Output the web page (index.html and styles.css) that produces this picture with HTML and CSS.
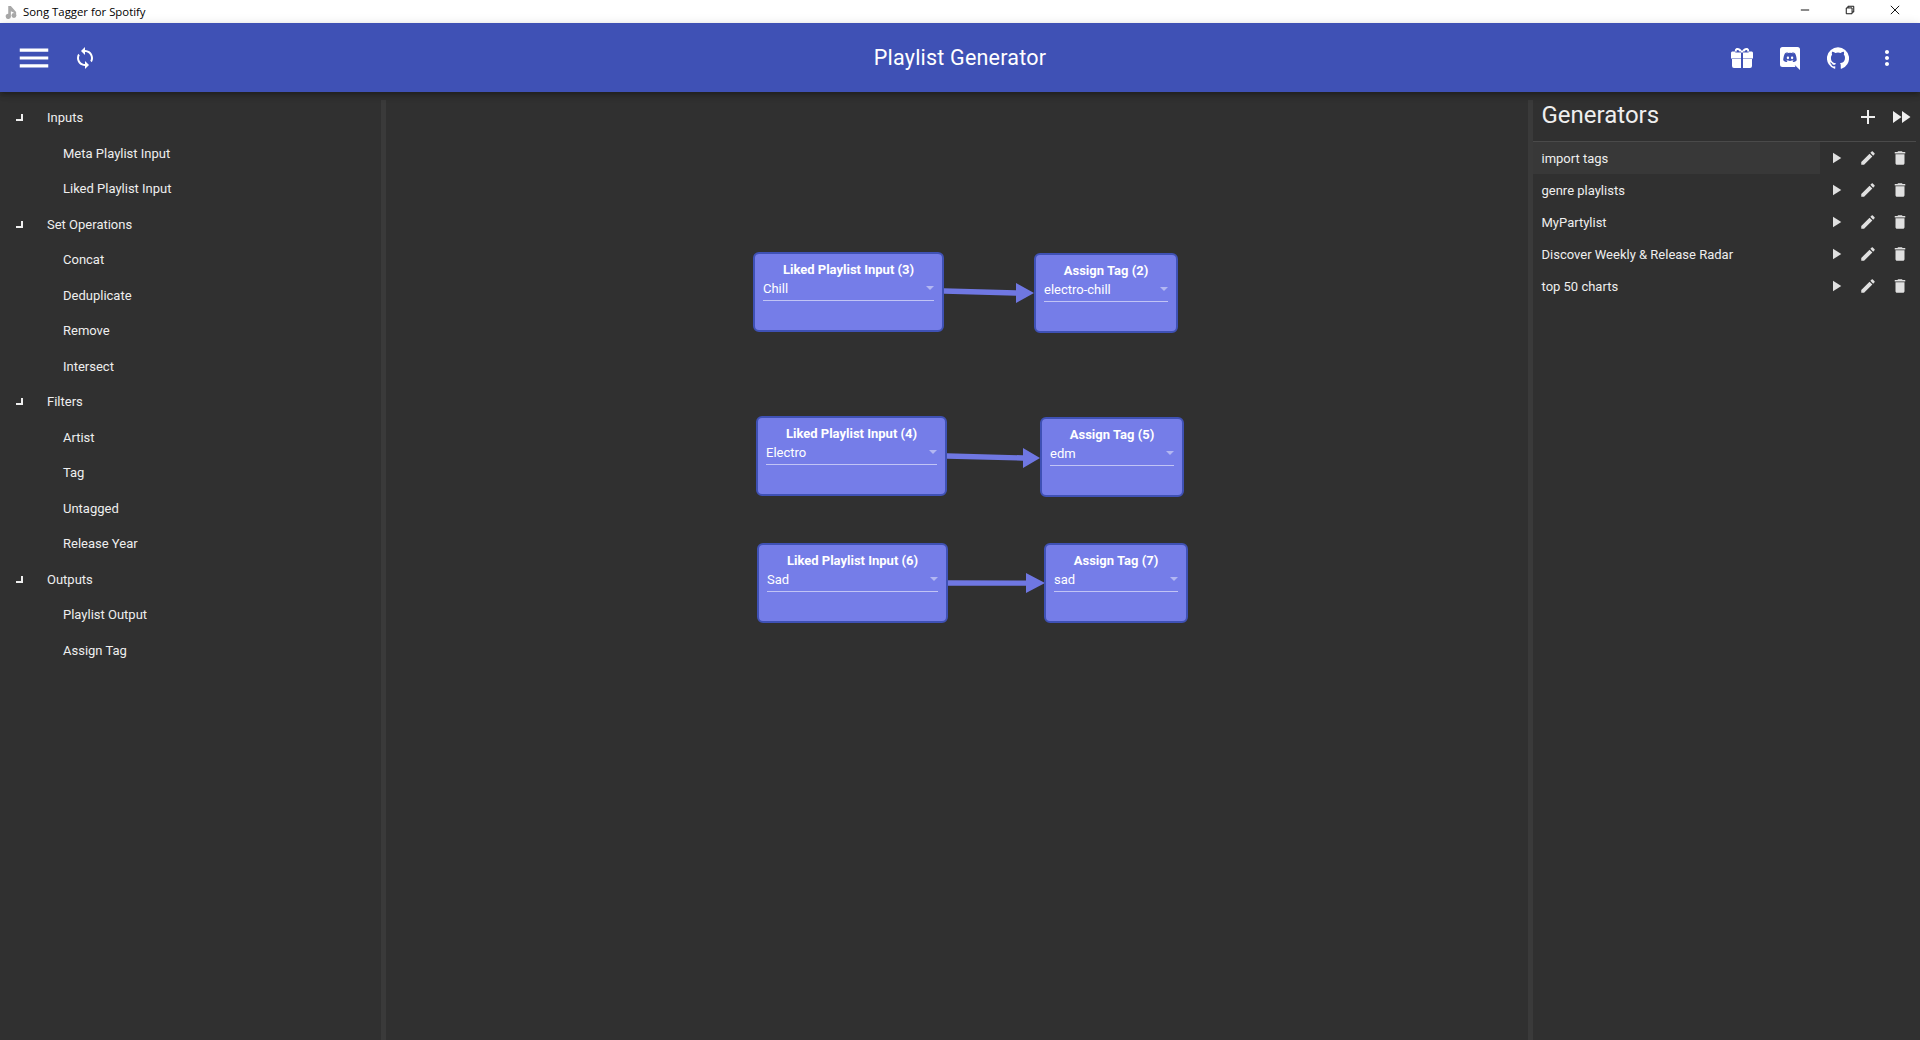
FILE: index.html
```html
<!DOCTYPE html>
<html lang="en">
<head>
<meta charset="utf-8">
<title>Song Tagger for Spotify</title>
<link rel="stylesheet" href="styles.css">
</head>
<body>
<header class="titlebar">
  <div class="titlebar-left">
    <svg class="app-icon" viewBox="0 0 16 16"><path d="M6 1h3l6 7v3.500l-3-3L9 7v5.500A3 3 0 1 1 6 10z"/><circle cx="12.500" cy="12" r="2.800"/></svg>
    <span class="app-name">Song Tagger for Spotify</span>
  </div>
  <div class="window-controls">
    <svg class="win-btn" viewBox="0 0 12 12"><path d="M1 6h10"/></svg>
    <svg class="win-btn" viewBox="0 0 12 12"><path d="M1.500 3.500h7v7h-7zM3.500 3.500v-2h7v7h-2"/></svg>
    <svg class="win-btn" viewBox="0 0 12 12"><path d="M1 1l10 10M11 1L1 11"/></svg>
  </div>
</header>

<nav class="appbar">
  <div class="appbar-side">
    <svg class="ico ico-menu" viewBox="0 0 24 24"><path d="M3 18h18v-2H3v2zm0-5h18v-2H3v2zm0-7v2h18V6H3z"/></svg>
    <svg class="ico ico-sync" viewBox="0 0 24 24"><path d="M12 4V1L8 5l4 4V6c3.310 0 6 2.690 6 6 0 1.010-.25 1.970-.7 2.800l1.460 1.460C19.540 15.030 20 13.570 20 12c0-4.420-3.580-8-8-8zm0 14c-3.310 0-6-2.690-6-6 0-1.010.25-1.970.7-2.800L5.240 7.740C4.460 8.970 4 10.430 4 12c0 4.420 3.580 8 8 8v3l4-4-4-4v3z"/></svg>
  </div>
  <h1 class="appbar-title">Playlist Generator</h1>
  <div class="appbar-side appbar-right">
    <svg class="ico ico-gift" viewBox="0 0 24 24"><path d="M2 5.500h9V12.500H1V7.500a2 2 0 0 1 1-2zM13 5.500h9a2 2 0 0 1 1 2v5H13zM2 13h9v9H4a2 2 0 0 1-2-2zM13 13h9v7a2 2 0 0 1-2 2h-7zM5.500 6.500C4.200 4.500 5 2 7.500 2c1.700 0 3.300 1.300 4.500 3 1.200-1.700 2.800-3 4.500-3 2.500 0 3.300 2.500 2 4.500zM7.700 4c-1.300 0-1.300 1.500-.5 1.500h2.300c-.5-.8-1.100-1.500-1.800-1.500zM16.300 4c-.7 0-1.300.7-1.800 1.500h2.300c.8 0 .8-1.500-.5-1.500z" fill-rule="evenodd"/></svg>
    <svg class="ico ico-discord" viewBox="0 0 24 24"><path d="M22,24L16.750,19L17.380,21H4.500A2.500,2.500 0 0,1 2,18.500V3.500A2.500,2.500 0 0,1 4.500,1H19.500A2.500,2.500 0 0,1 22,3.500V24M12,6.800C9.320,6.800 7.440,7.950 7.440,7.950C8.470,7.030 10.270,6.500 10.270,6.500L10.100,6.330C8.410,6.360 6.880,7.530 6.880,7.530C5.160,11.120 5.270,14.220 5.270,14.220C6.670,16.030 8.750,15.900 8.750,15.900L9.460,15C8.210,14.730 7.420,13.620 7.420,13.620C7.420,13.620 9.300,14.900 12,14.900C14.700,14.900 16.580,13.620 16.580,13.620C16.580,13.620 15.790,14.730 14.540,15L15.250,15.900C15.250,15.900 17.330,16.030 18.730,14.220C18.730,14.220 18.840,11.120 17.120,7.530C17.120,7.530 15.590,6.360 13.900,6.330L13.730,6.500C13.730,6.500 15.530,7.030 16.560,7.950C16.560,7.950 14.680,6.800 12,6.800M9.930,10.590C10.580,10.590 11.110,11.160 11.100,11.860C11.100,12.550 10.580,13.130 9.930,13.130C9.290,13.130 8.770,12.550 8.770,11.860C8.770,11.160 9.280,10.590 9.930,10.590M14.100,10.590C14.750,10.590 15.270,11.160 15.270,11.860C15.270,12.550 14.750,13.130 14.100,13.130C13.460,13.130 12.940,12.550 12.940,11.860C12.940,11.160 13.450,10.590 14.100,10.590Z"/></svg>
    <svg class="ico ico-github" viewBox="0 0 24 24"><path d="M12 .3a12 12 0 0 0-3.800 23.400c.6.1.8-.3.8-.6v-2c-3.300.7-4-1.600-4-1.600-.6-1.400-1.400-1.800-1.400-1.800-1-.7.1-.7.1-.7 1.200 0 1.900 1.200 1.900 1.200 1 1.800 2.800 1.300 3.500 1 0-.8.4-1.300.7-1.600-2.700-.3-5.500-1.300-5.500-6 0-1.200.5-2.300 1.300-3.100-.2-.4-.6-1.600 0-3.200 0 0 1-.3 3.400 1.200a11.500 11.500 0 0 1 6 0c2.300-1.500 3.300-1.200 3.300-1.200.6 1.600.2 2.800 0 3.200.9.8 1.300 1.900 1.300 3.200 0 4.600-2.800 5.600-5.500 5.900.5.4.9 1 .9 2.200v3.300c0 .3.1.7.8.6A12 12 0 0 0 12 .3"/></svg>
    <svg class="ico ico-more" viewBox="0 0 24 24"><path d="M12 8c1.100 0 2-.9 2-2s-.9-2-2-2-2 .9-2 2 .9 2 2 2zm0 2c-1.100 0-2 .9-2 2s.9 2 2 2 2-.9 2-2-.9-2-2-2zm0 6c-1.100 0-2 .9-2 2s.9 2 2 2 2-.9 2-2-.9-2-2-2z"/></svg>
  </div>
</nav>

<main class="workspace">
  <aside class="palette">
    <div class="group"><i class="corner"></i>Inputs</div>
    <div class="leaf">Meta Playlist Input</div>
    <div class="leaf">Liked Playlist Input</div>
    <div class="group"><i class="corner"></i>Set Operations</div>
    <div class="leaf">Concat</div>
    <div class="leaf">Deduplicate</div>
    <div class="leaf">Remove</div>
    <div class="leaf">Intersect</div>
    <div class="group"><i class="corner"></i>Filters</div>
    <div class="leaf">Artist</div>
    <div class="leaf">Tag</div>
    <div class="leaf">Untagged</div>
    <div class="leaf">Release Year</div>
    <div class="group"><i class="corner"></i>Outputs</div>
    <div class="leaf">Playlist Output</div>
    <div class="leaf">Assign Tag</div>
  </aside>
  <div class="splitter"></div>

  <section class="canvas">
    <svg class="edges" viewBox="0 0 1142 948">
      <path d="M558 196.300L630 198.300V191L648 201L630 211V203.700L558 201.700z" class="edge-shape"/>
      <path d="M561 361.300L637 363.300V356L654 366L637 376V368.700L561 366.700z" class="edge-shape"/>
      <path d="M562 488.300L640 488.500V481L659 491L640 501V493.700L562 493.700z" class="edge-shape"/>
    </svg>
    <div class="node n1"><div class="node-title">Liked Playlist Input (3)</div><div class="node-select"><span>Chill</span><i class="caret"></i></div></div>
    <div class="node tag n2"><div class="node-title">Assign Tag (2)</div><div class="node-select"><span>electro-chill</span><i class="caret"></i></div></div>
    <div class="node n3"><div class="node-title">Liked Playlist Input (4)</div><div class="node-select"><span>Electro</span><i class="caret"></i></div></div>
    <div class="node tag n4"><div class="node-title">Assign Tag (5)</div><div class="node-select"><span>edm</span><i class="caret"></i></div></div>
    <div class="node n5"><div class="node-title">Liked Playlist Input (6)</div><div class="node-select"><span>Sad</span><i class="caret"></i></div></div>
    <div class="node tag n6"><div class="node-title">Assign Tag (7)</div><div class="node-select"><span>sad</span><i class="caret"></i></div></div>
  </section>

  <div class="splitter"></div>
  <aside class="generators">
    <div class="gen-head">
      <h2 class="gen-title">Generators</h2>
      <svg class="ico head-btn" viewBox="0 0 24 24"><path d="M19 13h-6v6h-2v-6H5v-2h6V5h2v6h6v2z"/></svg>
      <svg class="ico head-btn" viewBox="0 0 24 24"><path d="M4 18l8.500-6L4 6v12zm9-12v12l8.500-6L13 6z"/></svg>
    </div>
    <div class="gen-row selected">
      <span class="gen-name">import tags</span>
      <span class="gen-btn"><svg viewBox="0 0 24 24"><path d="M8 5v14l11-7z"/></svg></span>
      <span class="gen-btn"><svg viewBox="0 0 24 24"><path d="M3 17.250V21h3.750L17.810 9.940l-3.750-3.750L3 17.250zM20.710 7.040c.39-.39.39-1.020 0-1.410l-2.340-2.340c-.39-.39-1.020-.39-1.410 0l-1.830 1.830 3.750 3.750 1.830-1.830z"/></svg></span>
      <span class="gen-btn"><svg viewBox="0 0 24 24"><path d="M6 19c0 1.100.9 2 2 2h8c1.100 0 2-.9 2-2V7H6v12zM19 4h-3.500l-1-1h-5l-1 1H5v2h14V4z"/></svg></span>
    </div>
    <div class="gen-row">
      <span class="gen-name">genre playlists</span>
      <span class="gen-btn"><svg viewBox="0 0 24 24"><path d="M8 5v14l11-7z"/></svg></span>
      <span class="gen-btn"><svg viewBox="0 0 24 24"><path d="M3 17.250V21h3.750L17.810 9.940l-3.750-3.750L3 17.250zM20.710 7.040c.39-.39.39-1.020 0-1.410l-2.340-2.340c-.39-.39-1.020-.39-1.410 0l-1.830 1.830 3.750 3.750 1.830-1.830z"/></svg></span>
      <span class="gen-btn"><svg viewBox="0 0 24 24"><path d="M6 19c0 1.100.9 2 2 2h8c1.100 0 2-.9 2-2V7H6v12zM19 4h-3.500l-1-1h-5l-1 1H5v2h14V4z"/></svg></span>
    </div>
    <div class="gen-row">
      <span class="gen-name">MyPartylist</span>
      <span class="gen-btn"><svg viewBox="0 0 24 24"><path d="M8 5v14l11-7z"/></svg></span>
      <span class="gen-btn"><svg viewBox="0 0 24 24"><path d="M3 17.250V21h3.750L17.810 9.940l-3.750-3.750L3 17.250zM20.710 7.040c.39-.39.39-1.020 0-1.410l-2.340-2.340c-.39-.39-1.020-.39-1.410 0l-1.830 1.830 3.750 3.750 1.830-1.830z"/></svg></span>
      <span class="gen-btn"><svg viewBox="0 0 24 24"><path d="M6 19c0 1.100.9 2 2 2h8c1.100 0 2-.9 2-2V7H6v12zM19 4h-3.500l-1-1h-5l-1 1H5v2h14V4z"/></svg></span>
    </div>
    <div class="gen-row">
      <span class="gen-name">Discover Weekly &amp; Release Radar</span>
      <span class="gen-btn"><svg viewBox="0 0 24 24"><path d="M8 5v14l11-7z"/></svg></span>
      <span class="gen-btn"><svg viewBox="0 0 24 24"><path d="M3 17.250V21h3.750L17.810 9.940l-3.750-3.750L3 17.250zM20.710 7.040c.39-.39.39-1.020 0-1.410l-2.340-2.340c-.39-.39-1.020-.39-1.410 0l-1.830 1.830 3.750 3.750 1.830-1.830z"/></svg></span>
      <span class="gen-btn"><svg viewBox="0 0 24 24"><path d="M6 19c0 1.100.9 2 2 2h8c1.100 0 2-.9 2-2V7H6v12zM19 4h-3.500l-1-1h-5l-1 1H5v2h14V4z"/></svg></span>
    </div>
    <div class="gen-row">
      <span class="gen-name">top 50 charts</span>
      <span class="gen-btn"><svg viewBox="0 0 24 24"><path d="M8 5v14l11-7z"/></svg></span>
      <span class="gen-btn"><svg viewBox="0 0 24 24"><path d="M3 17.250V21h3.750L17.810 9.940l-3.750-3.750L3 17.250zM20.710 7.040c.39-.39.39-1.020 0-1.410l-2.340-2.340c-.39-.39-1.020-.39-1.410 0l-1.830 1.830 3.750 3.750 1.830-1.830z"/></svg></span>
      <span class="gen-btn"><svg viewBox="0 0 24 24"><path d="M6 19c0 1.100.9 2 2 2h8c1.100 0 2-.9 2-2V7H6v12zM19 4h-3.500l-1-1h-5l-1 1H5v2h14V4z"/></svg></span>
    </div>
  </aside>
</main>
</body>
</html>
```
FILE: styles.css
```css
* { box-sizing: border-box; }
html, body { margin: 0; height: 100%; }
body {
  display: flex;
  flex-direction: column;
  height: 1040px;
  overflow: hidden;
  background: #303030;
  color: #fff;
  font-family: Roboto, "Liberation Sans", sans-serif;
  font-size: 13px;
}

.titlebar {
  height: 23px;
  flex: none;
  display: flex;
  align-items: center;
  justify-content: space-between;
  background: #fff;
  color: #000;
}
.titlebar-left { display: flex; align-items: center; padding-left: 3px; gap: 6px; }
.app-icon { width: 14px; height: 14px; fill: #a8a8a8; }
.app-name { font: 11.35px "Open Sans", "Noto Sans", sans-serif; }
.window-controls { display: flex; gap: 35px; padding-right: 20px; padding-bottom: 4px; }
.win-btn { width: 10px; height: 10px; fill: none; stroke: #000; stroke-width: 1.100; overflow: visible; }

.appbar {
  height: 69px;
  flex: none;
  position: relative;
  z-index: 2;
  display: flex;
  align-items: center;
  justify-content: space-between;
  padding: 0 21px 0 15px;
  background: #3f51b5;
  box-shadow: 0 2px 4px -1px rgba(0,0,0,.2), 0 4px 5px rgba(0,0,0,.14), 0 1px 10px rgba(0,0,0,.12);
}
.appbar-side { display: flex; align-items: center; }
.appbar-title {
  position: absolute;
  left: 0;
  right: 0;
  margin: 0;
  text-align: center;
  font-size: 21.5px;
  font-weight: 400;
  letter-spacing: .2px;
  pointer-events: none;
}
.ico { fill: #fff; flex: none; display: block; }
.ico-menu { width: 38px; height: 38px; }
.ico-sync { width: 24px; height: 24px; margin-left: 20px; }
.ico-gift { width: 24px; height: 24px; }
.ico-discord { width: 24px; height: 24px; margin-left: 24px; }
.ico-github { width: 22px; height: 22px; margin-left: 25px; }
.ico-more { width: 24px; height: 24px; margin-left: 26px; }

.workspace { flex: 1; min-height: 0; display: flex; }

.palette { width: 381px; flex: none; padding-top: 8px; }
.group, .leaf {
  height: 35.5px;
  display: flex;
  align-items: center;
  font-size: 13px;
  color: #eee;
}
.group { padding-left: 16px; }
.leaf { padding-left: 63px; }
.corner {
  width: 7px;
  height: 7px;
  margin-right: 24px;
  border-right: 2px solid #eee;
  border-bottom: 2px solid #eee;
}

.splitter {
  width: 5px;
  flex: none;
  margin-top: 8px;
  background: #3a3a3a;
}

.canvas { flex: 1; min-width: 0; position: relative; }
.edges { position: absolute; left: 0; top: 0; width: 1142px; height: 948px; }
.edge-shape { fill: #6f77e2; }

.node {
  position: absolute;
  width: 191px;
  height: 80px;
  padding: 8px 8px 0;
  border: 2px solid #3f51b5;
  border-radius: 6px;
  background: #757de8;
  text-align: center;
}
.node.tag { width: 144px; }
.node-title { font-size: 13px; font-weight: 700; line-height: 15px; }
.node-select {
  position: relative;
  height: 24px;
  padding-bottom: 1px;
  display: flex;
  align-items: center;
  font-size: 13px;
  border-bottom: 1px solid rgba(255,255,255,.55);
}
.caret {
  position: absolute;
  right: 0;
  top: 9px;
  border-left: 4px solid transparent;
  border-right: 4px solid transparent;
  border-top: 4px solid rgba(255,255,255,.45);
}
.n1 { left: 367px; top: 160px; }
.n2 { left: 648px; top: 161px; }
.n3 { left: 370px; top: 324px; }
.n4 { left: 654px; top: 325px; }
.n5 { left: 371px; top: 451px; }
.n6 { left: 658px; top: 451px; }

.generators { width: 387px; flex: none; padding: 8px 4px 0 0; }
.gen-head {
  height: 42px;
  display: flex;
  align-items: center;
  padding: 0 0 8px 8.5px;
  border-bottom: 1px solid #4a4a4a;
}
.gen-title { flex: 1; margin: -3px 0 0; font-size: 24px; font-weight: 400; color: #eee; }
.head-btn { width: 24px; height: 24px; fill: #eee; margin-right: 9px; }
.head-btn + .head-btn { margin-right: 3.500px; }
.gen-row { height: 32px; display: flex; align-items: center; }
.gen-name {
  flex: 1;
  height: 32px;
  display: flex;
  align-items: center;
  padding-left: 8.5px;
  font-size: 13px;
  color: #eee;
}
.selected .gen-name { background: #383838; }
.gen-btn {
  width: 32px;
  height: 32px;
  flex: none;
  display: flex;
  align-items: center;
  justify-content: center;
}
.gen-btn svg { width: 18px; height: 18px; fill: #e0e0e0; }
```
